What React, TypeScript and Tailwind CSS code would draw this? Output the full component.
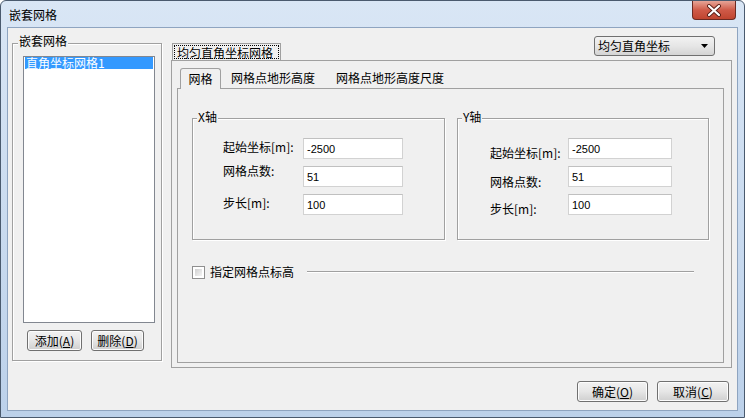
import React from "react";

function WinButton({ text, hot, className }: { text: string; hot: string; className: string }) {
  return (
    <div
      className={`h-[21px] flex items-center justify-center rounded-[3px] border border-[#707070] bg-gradient-to-b from-[#f2f2f2] via-[#e6e6e6] to-[#cfcfcf] shadow-[inset_0_0_0_1px_#fcfcfc] ${className}`}
    >
      <span>
        {text}(<span className="underline">{hot}</span>)
      </span>
    </div>
  );
}

type Row = { label: string; value: string; labelTop: string };

function AxisGroup({
  title,
  rows,
  labelPad,
  inputWidth,
  width,
}: {
  title: string;
  rows: Row[];
  labelPad: string;
  inputWidth: string;
  width: string;
}) {
  return (
    <div
      className={`relative h-[122px] border border-[#a0a0a0] shadow-[1px_1px_0_#fff,inset_1px_1px_0_#fff] ${width}`}
    >
      <span className="absolute -top-[9px] left-[4px] px-[1px] bg-[#f0f0f0]">{title}</span>
      <div className="flex flex-col gap-[7px] pt-[19px]">
        {rows.map((r) => (
          <div key={r.label} className="flex items-start h-[21px]">
            <div className={`w-[110px] ${labelPad}`}>
              <span className={`block ${r.labelTop}`}>{r.label}</span>
            </div>
            <div
              className={`h-[21px] bg-white border border-[#d2d2d2] border-t-[#c0c0c0] pl-[3px] pt-[3px] font-['Liberation_Sans',sans-serif] text-[11px] leading-[14px] ${inputWidth}`}
            >
              {r.value}
            </div>
          </div>
        ))}
      </div>
    </div>
  );
}

export default function App() {
  return (
    <div className="w-[745px] h-[418px] flex flex-col overflow-hidden rounded-t-[6px] border border-[#4a5a6e] bg-gradient-to-b from-[#d9e6f5] to-[#bcd1ea] text-[12px] leading-[14px] text-black font-['Noto_Sans_CJK_SC',sans-serif]">
      {/* title bar */}
      <div className="h-[26px] shrink-0 flex items-start justify-between">
        <span className="pl-[8px] pt-[7px]">嵌套网格</span>
        <div className="mr-[8px] w-[44px] h-[19px] flex items-center justify-center rounded-b-[4px] border border-t-0 border-[#6b2a22] bg-gradient-to-b from-[#e6a497] via-[#cf5a48] to-[#c0442f]">
          <svg width="16" height="13" viewBox="0 0 16 13">
            <path d="M3 2 L13 11 M13 2 L3 11" stroke="#5a1f18" strokeWidth="4" strokeLinecap="round" />
            <path d="M3 2 L13 11 M13 2 L3 11" stroke="#ffffff" strokeWidth="2.2" strokeLinecap="round" />
          </svg>
        </div>
      </div>

      {/* client area */}
      <div className="ml-[6px] w-[731px] h-[384px] flex flex-col bg-[#f0f0f0] border border-[#8ea4c0]">
        <div className="flex items-start mt-[8px] h-[332px]">
          {/* left group */}
          <div className="relative ml-[4px] mt-[7px] w-[150px] h-[318px] flex flex-col border border-[#a0a0a0] shadow-[1px_1px_0_#fff,inset_1px_1px_0_#fff]">
            <span className="absolute -top-[10px] left-[5px] px-[1px] bg-[#f0f0f0]">嵌套网格</span>
            <div className="mt-[12px] ml-[10px] w-[132px] h-[267px] bg-white border border-[#828790] px-[1px]">
              <div className="h-[12px] leading-[12px] bg-[#3399ff] text-white pl-[1px]">直角坐标网格1</div>
            </div>
            <div className="flex gap-[9px] mt-[7px] ml-[14px]">
              <WinButton text="添加" hot="A" className="w-[55px]" />
              <WinButton text="删除" hot="D" className="w-[53px]" />
            </div>
          </div>

          {/* right column */}
          <div className="ml-[9px] w-[561px] flex flex-col">
            <div className="h-[24px] flex items-end justify-between">
              <div className="ml-[1px] w-[109px] h-[17px] p-[1px] border border-b-0 border-[#a0a0a0] bg-[#f0f0f0]">
                <div className="h-full border border-dotted border-black pl-[2px] leading-[13px]">均匀直角坐标网格</div>
              </div>
              <div className="self-start mr-[17px] w-[121px] h-[20px] flex items-center justify-between rounded-[3px] border border-[#707070] bg-gradient-to-b from-[#f2f2f2] via-[#e6e6e6] to-[#d4d4d4] pl-[3px] pr-[6px]">
                <span>均匀直角坐标</span>
                <svg width="7" height="4" viewBox="0 0 7 4">
                  <path d="M0 0 H7 L3.5 4 Z" fill="#000" />
                </svg>
              </div>
            </div>

            {/* outer panel */}
            <div className="h-[308px] flex flex-col border border-[#a0a0a0] pl-[5px] pt-[7px] pr-[7px] pb-[4px]">
              <div className="h-[20px] flex items-end">
                <div className="relative z-10 ml-[3px] w-[41px] h-[21px] mb-[-1px] rounded-t-[3px] border border-b-0 border-[#a0a0a0] bg-[#f0f0f0] text-center leading-[19px]">
                  网格
                </div>
                <span className="ml-[10px] mb-[3px]">网格点地形高度</span>
                <span className="ml-[21px] mb-[3px]">网格点地形高度尺度</span>
              </div>

              {/* tab page */}
              <div className="flex-1 flex flex-col border border-[#a0a0a0]">
                <div className="flex gap-[12px] mt-[29px] ml-[14px]">
                  <AxisGroup
                    title="X轴"
                    width="w-[253px]"
                    labelPad="pl-[30px]"
                    inputWidth="w-[100px]"
                    rows={[
                      { label: "起始坐标[m]:", value: "-2500", labelTop: "mt-[2px]" },
                      { label: "网格点数:", value: "51", labelTop: "-mt-[2px]" },
                      { label: "步长[m]:", value: "100", labelTop: "mt-[2px]" },
                    ]}
                  />
                  <AxisGroup
                    title="Y轴"
                    width="w-[252px]"
                    labelPad="pl-[32px]"
                    inputWidth="w-[104px]"
                    rows={[
                      { label: "起始坐标[m]:", value: "-2500", labelTop: "mt-[8px]" },
                      { label: "网格点数:", value: "51", labelTop: "mt-[9px]" },
                      { label: "步长[m]:", value: "100", labelTop: "mt-[8px]" },
                    ]}
                  />
                </div>

                <div className="flex items-center h-[14px] mt-[25px] ml-[14px]">
                  <div className="w-[13px] h-[13px] border border-[#8f8f8f] p-[2px] bg-white">
                    <div className="w-full h-full bg-gradient-to-br from-[#d0d0d0] to-[#f4f4f4]" />
                  </div>
                  <span className="ml-[5px]">指定网格点标高</span>
                  <div className="ml-[13px] w-[387px] h-[2px] border-t border-[#a0a0a0] border-b border-b-white" />
                </div>
              </div>
            </div>
          </div>
        </div>

        {/* bottom buttons */}
        <div className="flex justify-end gap-[9px] mt-[13px] pr-[8px]">
          <WinButton text="确定" hot="O" className="w-[71px]" />
          <WinButton text="取消" hot="C" className="w-[72px]" />
        </div>
      </div>
    </div>
  );
}
